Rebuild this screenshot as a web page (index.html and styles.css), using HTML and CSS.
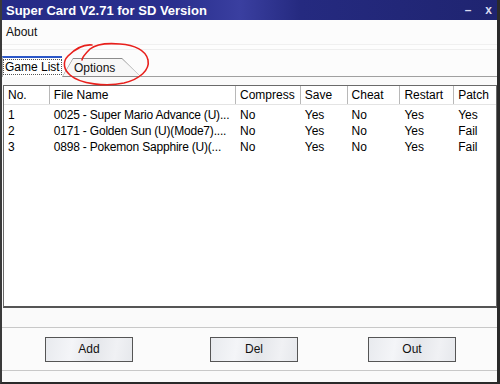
FILE: index.html
```html
<!DOCTYPE html>
<html lang="en">
<head>
  <meta charset="UTF-8">
  <title>Super Card V2.71 for SD Version</title>
  <link rel="stylesheet" href="styles.css">
</head>
<body>
<div class="window">
  <div class="titlebar">
    <span class="title">Super Card V2.71 for SD Version</span>
    <span class="controls"><span class="min">&#8211;</span><span class="close">x</span></span>
  </div>

  <div class="menu"><span>About</span></div>
  <div class="rebar"></div>

  <div class="tabs">
    <div class="tab active"><span class="focus">Game List</span></div>
    <div class="tab other">Options</div>
    <div class="tab-rest"></div>
    <!-- red circle drawn over the Options tab -->
    <svg class="scribble" width="100" height="50" viewBox="0 0 100 50">
      <path d="M32 5 C22 4 14 10 8 16 C2 22 4 30 10 35 C20 44 46 47 64 43 C80 39 90 30 88 20 C86 10 74 5 60 4 C48 3 36 4 30 9 C26 13 22 17 22 20"
            fill="none" stroke="#e8201c" stroke-width="1.6" stroke-linecap="round"/>
    </svg>
  </div>

  <div class="list">
    <div class="row head">
      <div class="c no">No.</div>
      <div class="c name">File Name</div>
      <div class="c comp">Compress</div>
      <div class="c save">Save</div>
      <div class="c cheat">Cheat</div>
      <div class="c rest">Restart</div>
      <div class="c patch">Patch</div>
    </div>
    <div class="row">
      <div class="c no">1</div>
      <div class="c name">0025 - Super Mario Advance (U)...</div>
      <div class="c comp">No</div>
      <div class="c save">Yes</div>
      <div class="c cheat">No</div>
      <div class="c rest">Yes</div>
      <div class="c patch">Yes</div>
    </div>
    <div class="row">
      <div class="c no">2</div>
      <div class="c name">0171 - Golden Sun (U)(Mode7)....</div>
      <div class="c comp">No</div>
      <div class="c save">Yes</div>
      <div class="c cheat">No</div>
      <div class="c rest">Yes</div>
      <div class="c patch">Fail</div>
    </div>
    <div class="row">
      <div class="c no">3</div>
      <div class="c name">0898 - Pokemon Sapphire (U)(...</div>
      <div class="c comp">No</div>
      <div class="c save">Yes</div>
      <div class="c cheat">No</div>
      <div class="c rest">Yes</div>
      <div class="c patch">Fail</div>
    </div>
  </div>

  <div class="gap"></div>
  <div class="buttons">
    <button class="btn">Add</button>
    <button class="btn del">Del</button>
    <button class="btn out">Out</button>
  </div>
  <div class="bottom"></div>
</div>
</body>
</html>
```

FILE: styles.css
```css
/* Basic styling */
body {
  margin: 0;
  padding: 0;
  font-family: 'Liberation Sans', Arial, sans-serif;
  font-size: 12px;
  color: #000;
  background-color: #fff;
}
.window {
  width: 500px;
  height: 384px;
  box-sizing: border-box;
  border-left: 2px solid #3a3a3a;
  border-right: 3px solid #2a2a2a;
  border-bottom: 2px solid #2a2a2a;
  background-color: #fafafa;
  display: flex;
  flex-direction: column;
  overflow: hidden;
}
.titlebar {
  height: 20px;
  flex: none;
  margin-left: -2px;
  margin-right: -3px;
  background: linear-gradient(90deg, #252b86 0%, #2a2f8e 35%, #3a3fa0 48%, #252a80 60%, #1f2470 100%);
  color: #fff;
  display: flex;
  align-items: center;
  justify-content: space-between;
  padding: 0 8px 0 6px;
}
.title {
  font-weight: bold;
  font-size: 13px;
}
.controls {
  display: flex;
  gap: 14px;
  font-weight: bold;
  font-size: 12px;
  color: #d8daf0;
}
.menu {
  height: 24px;
  flex: none;
  background-color: #fcfcfc;
  display: flex;
  align-items: center;
  padding-left: 4px;
  color: #111;
}
.rebar {
  height: 11px;
  flex: none;
  background: linear-gradient(#f0f0f0 0, #f0f0f0 1px, #fdfdfd 1px, #fdfdfd 5px, #eeeeee 5px, #eeeeee 6px, #fcfcfc 6px);
}
.tabs {
  position: relative;
  height: 22px;
  flex: none;
  display: flex;
  align-items: flex-end;
  background-color: #fcfcfc;
}
.tab {
  box-sizing: border-box;
}
.tab.active {
  width: 60px;
  height: 21px;
  border-top: 2px solid #2c58c8;
  border-left: 1px solid #b0b0b0;
  padding: 2px 0 0 1px;
  background-color: #fff;
  white-space: nowrap;
  overflow: hidden;
}
.focus {
  outline: 1px dotted #555;
  padding: 0 1px;
}
.tab.other {
  width: 79px;
  height: 19px;
  padding: 3px 0 0 12px;
  background-color: #8c8c8c;
  clip-path: polygon(0 100%, 11px 0, 60px 0, 100% 100%);
  color: #111;
  position: relative;
  z-index: 0;
}
.tab.other::before {
  content: "";
  position: absolute;
  left: 1px;
  top: 1px;
  right: 1px;
  bottom: 1px;
  background-color: #f7f7f7;
  clip-path: polygon(0 100%, 10px 0, 59px 0, 100% 100%);
  z-index: -1;
}
.tab-rest {
  flex: 1;
  height: 1px;
  background-color: #a0a0a0;
}
.scribble {
  position: absolute;
  left: 58px;
  top: -15px;
}
.list {
  margin: 8px 0 0 1px;
  height: 223px;
  flex: none;
  box-sizing: border-box;
  border: 1px solid #6a6a6a;
  border-bottom: 2px solid #555;
  background-color: #fff;
}
.row {
  display: flex;
  height: 16px;
  align-items: center;
}
.row.head {
  height: 18px;
  margin-bottom: 2px;
  border-bottom: 1px solid #e4e4e4;
}
.head .c {
  height: 18px;
  line-height: 18px;
  border-right: 1px solid #b8b8b8;
}
.c {
  padding-left: 4px;
  white-space: nowrap;
  overflow: hidden;
  box-sizing: border-box;
}
.no { width: 46px; }
.name { width: 187px; letter-spacing: -0.2px; }
.comp { width: 65px; }
.save { width: 47px; }
.cheat { width: 53px; }
.rest { width: 54px; }
.patch { width: 42px; }
.head .name { letter-spacing: 0; }
.head .patch { border-right: none; }
.gap {
  height: 19px;
  flex: none;
  border-bottom: 1px solid #c8c8c8;
}
.buttons {
  height: 42px;
  flex: none;
  display: flex;
  align-items: center;
  padding-left: 43px;
  border-bottom: 1px solid #c8c8c8;
  background-color: #fbfbfb;
}
.btn {
  width: 88px;
  height: 25px;
  border: 1px solid #555;
  background: linear-gradient(100deg, #e8eaee 0%, #f4f5f8 30%, #e4e6ea 55%, #f0f1f4 80%, #e6e8ec 100%);
  font-family: 'Liberation Sans', Arial, sans-serif;
  font-size: 12px;
  color: #111;
  padding: 0;
}
.del { margin-left: 77px; }
.out { margin-left: 70px; }
.bottom {
  flex: 1;
}
```
